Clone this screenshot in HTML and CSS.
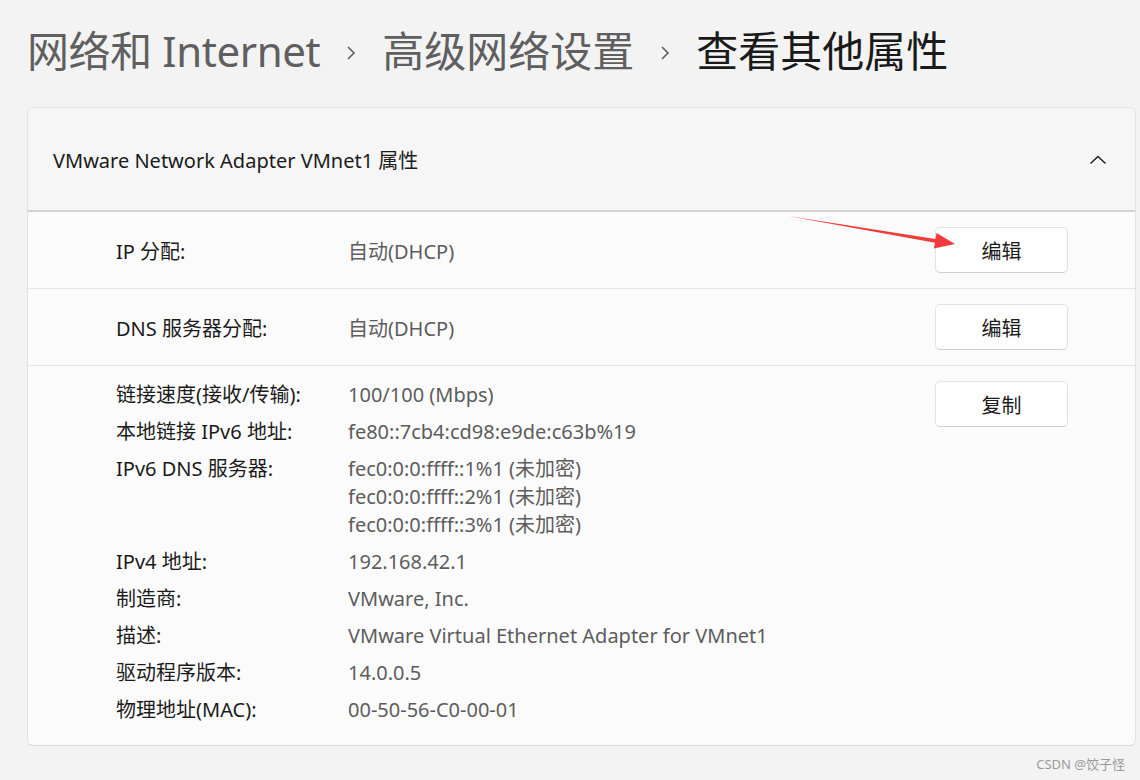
FILE: index.html
```html
<!DOCTYPE html>
<html lang="zh-CN">
<head>
    <meta charset="UTF-8">
    <meta name="viewport" content="width=device-width, initial-scale=1.0">
    <title>查看其他属性</title>
    <link rel="stylesheet" href="styles.css">
</head>
<body>
    <div class="page">
        <div class="breadcrumb">
            <span class="crumb">网络和 Internet</span>
            <svg class="sep" width="10" height="16" viewBox="0 0 10 16"><path d="M2 2 L8 8 L2 14" fill="none" stroke="#5f5f5f" stroke-width="1.6"/></svg>
            <span class="crumb">高级网络设置</span>
            <svg class="sep" width="10" height="16" viewBox="0 0 10 16"><path d="M2 2 L8 8 L2 14" fill="none" stroke="#5f5f5f" stroke-width="1.6"/></svg>
            <span class="crumb current">查看其他属性</span>
        </div>

        <div class="card">
            <div class="card-header">
                <span class="card-title">VMware Network Adapter VMnet1 属性</span>
                <svg class="chevron" width="18" height="10" viewBox="0 0 18 10"><path d="M1.5 8.5 L9 1.5 L16.5 8.5" fill="none" stroke="#1b1b1b" stroke-width="1.4"/></svg>
            </div>

            <div class="row">
                <div class="row-info">
                    <span class="label">IP 分配:</span>
                    <span class="value">自动(DHCP)</span>
                </div>
                <button class="btn">编辑</button>
            </div>

            <div class="row">
                <div class="row-info">
                    <span class="label">DNS 服务器分配:</span>
                    <span class="value">自动(DHCP)</span>
                </div>
                <button class="btn">编辑</button>
            </div>

            <div class="row details">
                <div class="props">
                    <span class="label">链接速度(接收/传输):</span>
                    <span class="value">100/100 (Mbps)</span>

                    <span class="label">本地链接 IPv6 地址:</span>
                    <span class="value">fe80::7cb4:cd98:e9de:c63b%19</span>

                    <span class="label">IPv6 DNS 服务器:</span>
                    <span class="value">fec0:0:0:ffff::1%1 (未加密)<br>fec0:0:0:ffff::2%1 (未加密)<br>fec0:0:0:ffff::3%1 (未加密)</span>

                    <span class="label">IPv4 地址:</span>
                    <span class="value">192.168.42.1</span>

                    <span class="label">制造商:</span>
                    <span class="value">VMware, Inc.</span>

                    <span class="label">描述:</span>
                    <span class="value">VMware Virtual Ethernet Adapter for VMnet1</span>

                    <span class="label">驱动程序版本:</span>
                    <span class="value">14.0.0.5</span>

                    <span class="label">物理地址(MAC):</span>
                    <span class="value">00-50-56-C0-00-01</span>
                </div>
                <button class="btn">复制</button>
            </div>
        </div>

        <div class="watermark">CSDN @饺子怪</div>

        <!-- annotation arrow drawn over the screenshot -->
        <svg class="arrow" width="1140" height="780" viewBox="0 0 1140 780">
            <polygon points="788,216 935.3,239 936.6,233 955,244 933.8,248.4 935,242.8" fill="#f23c3c"/>
        </svg>
    </div>
</body>
</html>
```

FILE: styles.css
```css
* {
    margin: 0;
    padding: 0;
    box-sizing: border-box;
}

body {
    font-family: "Noto Sans", "Noto Sans CJK SC", sans-serif;
    background: #f3f3f3;
    color: #1b1b1b;
    width: 1140px;
    height: 780px;
    overflow: hidden;
}

.page {
    position: relative;
    padding: 22px 4px 0 27px;
    height: 780px;
}

.breadcrumb {
    display: flex;
    align-items: center;
    height: 58px;
    margin-bottom: 27px;
    font-size: 42px;
    color: #5f5f5f;
}

.crumb {
    line-height: 58px;
    white-space: nowrap;
}

.crumb:first-child {
    letter-spacing: -0.4px;
}

.crumb.current {
    color: #1a1a1a;
}

.sep {
    margin: 4px 26px 0 26px;
}

.card {
    width: 1109px;
    background: #fbfbfb;
    border: 1px solid #e3e3e3;
    border-bottom-color: #d6d6d6;
    border-radius: 6px;
    overflow: hidden;
}

.card-header {
    display: flex;
    align-items: center;
    justify-content: space-between;
    height: 104px;
    padding: 0 28px 0 25px;
    background: #f6f6f6;
    border-bottom: 2px solid #d4d4d4;
}

.card-title {
    font-size: 20px;
}

.chevron {
    margin-top: 2px;
}

.row {
    display: flex;
    align-items: center;
    justify-content: space-between;
    height: 77px;
    padding: 0 67px 0 88px;
    border-bottom: 1px solid #e5e5e5;
    font-size: 20px;
}

.row-info {
    display: flex;
}

.label {
    width: 232px;
    color: #1b1b1b;
}

.value {
    color: #5d5d5d;
}

.btn {
    width: 133px;
    height: 46px;
    background: #fefefe;
    border: 1px solid #e3e3e3;
    border-bottom-color: #cfcfcf;
    border-radius: 5px;
    font-family: inherit;
    font-size: 20px;
    color: #1b1b1b;
}

.row.details {
    height: auto;
    align-items: flex-start;
    padding-top: 15px;
    padding-bottom: 21px;
    border-bottom: none;
}

.props {
    display: grid;
    grid-template-columns: 232px 1fr;
    row-gap: 9px;
    line-height: 28px;
}

.props .label {
    width: auto;
}

.watermark {
    margin-top: 8px;
    padding-right: 11px;
    text-align: right;
    font-size: 13px;
    color: #9a9a9a;
}

.arrow {
    position: absolute;
    top: 0;
    left: 0;
    pointer-events: none;
}
```
